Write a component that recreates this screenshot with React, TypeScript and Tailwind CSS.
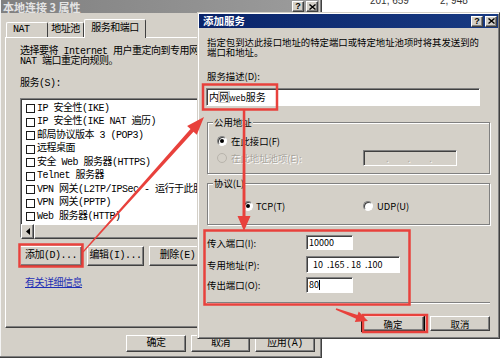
import React from "react";

const raised =
  "border border-t-white border-l-white border-r-[#404040] border-b-[#404040] shadow-[inset_-1px_-1px_#808080]";
const sunken =
  "border border-t-[#808080] border-l-[#808080] border-r-white border-b-white shadow-[inset_1px_1px_#404040]";
const mono = "font-['Liberation_Mono','Noto_Sans_CJK_SC',monospace] tracking-[-0.5px]";
const cjk = "font-['Noto_Sans_CJK_SC',sans-serif]";

function Btn({ w, h, children, def }: { w: string; h: string; children: React.ReactNode; def?: boolean }) {
  return (
    <div
      className={`${raised} ${w} ${h} ${def ? "outline outline-1 outline-black" : ""} shrink-0 bg-[#d4d0c8] flex items-center justify-center text-black`}
    >
      {children}
    </div>
  );
}

function CapBtn({ kind }: { kind: "help" | "close" }) {
  return (
    <div className={`${raised} w-[12px] h-[11px] bg-[#d4d0c8] flex items-center justify-center`}>
      {kind === "help" ? (
        <span className="text-[9px] font-bold leading-none text-black font-['Liberation_Sans',sans-serif]">?</span>
      ) : (
        <svg width="7" height="6" viewBox="0 0 7 6">
          <path d="M0.5 0.5 L6.5 5.5 M6.5 0.5 L0.5 5.5" stroke="black" strokeWidth="1.4" />
        </svg>
      )}
    </div>
  );
}

function Check() {
  return <span className="w-[9px] h-[9px] shrink-0 bg-white border border-[#1a1a1a]" />;
}

function Radio({ on, off }: { on?: boolean; off?: boolean }) {
  return (
    <span
      className={`w-[10px] h-[10px] shrink-0 rounded-full border flex items-center justify-center ${
        off
          ? "border-[#b8b4ac] bg-[#d4d0c8]"
          : "border-t-[#808080] border-l-[#808080] border-r-white border-b-white shadow-[inset_1px_1px_#404040] bg-white"
      }`}
    >
      {on && <span className="w-[4px] h-[4px] rounded-full bg-black" />}
    </span>
  );
}

// the list runs on under the other dialog; only the visible part is kept
const services = [
  "IP 安全性(IKE)",
  "IP 安全性(IKE NAT 遍历)",
  "邮局协议版本 3 (POP3)",
  "远程桌面",
  "安全 Web 服务器(HTTPS)",
  "Telnet 服务器",
  "VPN 网关(L2TP/IPSec - 运行于此服务",
  "VPN 网关(PPTP)",
  "Web 服务器(HTTP)",
];

function PropsDialog() {
  return (
    <div className="absolute left-0 top-0 w-[322px] h-[358px] bg-[#d4d0c8] border-r border-b border-r-[#404040] border-b-[#404040] shadow-[inset_-1px_-1px_#808080,inset_1px_0_#f4f4f4] flex flex-col pl-[1px] pr-[2px] text-[10px] text-black">
      <div className="h-[13px] shrink-0 bg-gradient-to-r from-[#808080] to-[#9c9c9c] flex items-center pl-[2px] pr-[1px]">
        <span className={`${cjk} text-[11px] font-bold leading-[12px] text-[#e4e4e4]`}>本地连接 3 属性</span>
        <div className="ml-auto flex gap-[2px]">
          <CapBtn kind="help" />
          <CapBtn kind="close" />
        </div>
      </div>

      <div className={`${mono} mt-[6px] ml-[5px] h-[18px] flex items-end leading-[10px]`}>
        <div className="w-[42px] h-[15px] border-t border-l border-r border-t-white border-l-white border-r-[#404040] rounded-t-[2px] flex items-center pl-[6px]">
          NAT
        </div>
        <div className="w-[36px] h-[15px] border-t border-r border-t-white border-r-[#404040] rounded-t-[2px] flex items-center justify-center">
          地址池
        </div>
        <div className="relative w-[62px] h-[19px] -mb-px bg-[#d4d0c8] border-t border-l border-r border-t-white border-l-white border-r-[#404040] rounded-t-[2px] flex items-center justify-center">
          服务和端口
        </div>
      </div>

      <div className={`${raised} ${mono} ml-[4px] w-[312px] h-[291px] shrink-0 overflow-hidden flex flex-col pl-[14px] leading-[10px]`}>
        <div className="mt-[9px] whitespace-nowrap">
          <div>选择要将 Internet 用户重定向到专用网</div>
          <div>NAT 端口重定向规则。</div>
        </div>
        <div className="mt-[12px]">服务(S):</div>
        <div className={`${sunken} mt-[9px] w-[285px] h-[140px] bg-white flex flex-col`}>
          <div className="pt-[3px] pl-[5px] flex flex-col">
            {services.map((s) => (
              <div key={s} className="h-[13.5px] flex items-center gap-[2px] whitespace-nowrap">
                <Check />
                <span>{s}</span>
              </div>
            ))}
          </div>
          <div className="mt-auto h-[15px] flex bg-[#e6e4df]">
            <div className={`${raised} w-[13px] h-[15px] bg-[#d4d0c8] flex items-center justify-center`}>
              <svg width="4" height="7" viewBox="0 0 4 7">
                <path d="M4 0 L0 3.5 L4 7 Z" fill="black" />
              </svg>
            </div>
            <div className={`${raised} flex-1 h-[15px] bg-[#d4d0c8]`} />
          </div>
        </div>
        <div className="mt-[8px] flex gap-[5px]">
          <Btn w="w-[62px]" h="h-[20px]">添加(D)...</Btn>
          <Btn w="w-[57px]" h="h-[20px]">编辑(I)...</Btn>
          <Btn w="w-[57px]" h="h-[20px]">删除(E)</Btn>
        </div>
        <div className="mt-[13px] ml-[5px] text-[#1f2fb4] underline">有关详细信息</div>
      </div>

      <div className={`${mono} mt-[7px] pr-[4px] flex justify-end gap-[5px] leading-[10px]`}>
        <Btn w="w-[60px]" h="h-[17px]">确定</Btn>
        <Btn w="w-[59px]" h="h-[17px]">取消</Btn>
        <Btn w="w-[60px]" h="h-[17px]">应用(A)</Btn>
      </div>
    </div>
  );
}

function AddServiceDialog() {
  return (
    <div
      className={`${cjk} absolute left-[197px] top-[12px] w-[303px] h-[327px] bg-[#d4d0c8] border border-t-[#d4d0c8] border-l-[#d4d0c8] border-r-[#404040] border-b-[#404040] shadow-[inset_1px_1px_white,inset_-1px_-1px_#808080] p-[1px] flex flex-col text-[9.4px] leading-[10px] text-black`}
    >
      <div className="h-[14px] shrink-0 bg-gradient-to-r from-[#0a246a] to-[#183a82] flex items-center pl-[4px] pr-[1px]">
        <span className="text-[10.5px] font-bold text-white leading-[12px]">添加服务</span>
        <div className="ml-auto flex gap-[2px]">
          <CapBtn kind="help" />
          <CapBtn kind="close" />
        </div>
      </div>

      <div className="px-[8px] flex flex-col">
        <div className="mt-[9px] whitespace-nowrap">
          <div>指定包到达此接口地址的特定端口或特定地址池项时将其发送到的</div>
          <div>端口和地址。</div>
        </div>
        <div className="mt-[14px]">服务描述(D):</div>
        <div className={`${sunken} mt-[7px] -ml-[1px] w-[274px] h-[18px] bg-white flex items-center pl-[2px] text-[10px]`}>
          内<span className="outline outline-1 outline-[#c8c8c8]">网</span>
          <span className="text-[8.5px]">web</span>服务
        </div>

        <div className="mt-[16px] w-[283px] h-[52px] border border-[#808080] shadow-[1px_1px_0_white,inset_1px_1px_0_white] flex flex-col pl-[9px]">
          <span className="-mt-[6px] -ml-[4px] self-start px-[1px] bg-[#d4d0c8]">公用地址</span>
          <div className="mt-[8px] h-[12px] flex items-center gap-[4px]">
            <Radio on />
            <span>在此接口(F)</span>
          </div>
          <div className="mt-[3px] h-[16px] flex items-center">
            <div className="w-[146px] flex items-center gap-[4px] text-[#a8a49c] [text-shadow:1px_1px_0_white]">
              <Radio off />
              <span>在此地址池项(E):</span>
            </div>
            <div className={`${sunken} w-[94px] h-[16px] bg-[#d4d0c8] flex items-center pl-[22px] gap-[19px] text-[#a8a49c] [text-shadow:1px_1px_0_white]`}>
              <span>.</span>
              <span>.</span>
              <span>.</span>
            </div>
          </div>
        </div>

        <div className="mt-[9px] w-[283px] h-[42px] border border-[#808080] shadow-[1px_1px_0_white,inset_1px_1px_0_white] flex flex-col pl-[9px]">
          <span className="-mt-[6px] -ml-[4px] self-start px-[1px] bg-[#d4d0c8]">协议(L)</span>
          <div className="mt-[12px] h-[12px] pl-[26px] flex items-center">
            <div className="w-[120px] flex items-center gap-[3px]">
              <Radio on />
              <span>TCP(T)</span>
            </div>
            <div className="flex items-center gap-[4px]">
              <Radio />
              <span>UDP(U)</span>
            </div>
          </div>
        </div>

        <div className="mt-[10px] h-[15px] flex items-center">
          <span className="w-[99px]">传入端口(I):</span>
          <div className={`${sunken} w-[47px] h-[15px] bg-white flex items-center pl-[2px] text-[9px]`}>10000</div>
        </div>
        <div className="mt-[6px] h-[17px] flex items-center">
          <span className="w-[99px]">专用地址(P):</span>
          <div className={`${sunken} w-[94px] h-[17px] bg-white flex items-center pl-[6px] text-[9px] whitespace-pre`}>
            {"10  .165 . 18  .100"}
          </div>
        </div>
        <div className="mt-[4px] h-[16px] flex items-center">
          <span className="w-[99px]">传出端口(O):</span>
          <div className={`${sunken} w-[47px] h-[16px] bg-white flex items-center pl-[2px] text-[9px]`}>
            80<span className="w-px h-[10px] bg-black" />
          </div>
        </div>

        <div className="mt-[9px] w-[283px] border-t border-b border-t-[#808080] border-b-white" />

        <div className="mt-[12px] flex justify-end gap-[6px]">
          <Btn w="w-[62px]" h="h-[15px]" def>
            确定
          </Btn>
          <Btn w="w-[60px]" h="h-[15px]">
            取消
          </Btn>
        </div>
      </div>
    </div>
  );
}

function arrow(x1: number, y1: number, x2: number, y2: number, tail: number, shaft: number, headL: number, headW: number) {
  const len = Math.hypot(x2 - x1, y2 - y1);
  const ux = (x2 - x1) / len;
  const uy = (y2 - y1) / len;
  const nx = -uy;
  const ny = ux;
  const bx = x2 - ux * headL;
  const by = y2 - uy * headL;
  const p = (x: number, y: number) => `${x.toFixed(1)},${y.toFixed(1)}`;
  return [
    p(x1 + (nx * tail) / 2, y1 + (ny * tail) / 2),
    p(bx + (nx * shaft) / 2, by + (ny * shaft) / 2),
    p(bx + (nx * headW) / 2, by + (ny * headW) / 2),
    p(x2, y2),
    p(bx - (nx * headW) / 2, by - (ny * headW) / 2),
    p(bx - (nx * shaft) / 2, by - (ny * shaft) / 2),
    p(x1 - (nx * tail) / 2, y1 - (ny * tail) / 2),
  ].join(" ");
}

function Marks() {
  const red = "#e8413c";
  return (
    <svg className="absolute inset-0 pointer-events-none" width="500" height="361" viewBox="0 0 500 361">
      <g fill="none" stroke={red} strokeWidth="2.5">
        <rect x="19.5" y="244.5" width="63" height="22" />
        <rect x="203" y="84.5" width="74" height="25" />
        <rect x="204.5" y="230.5" width="205" height="74" />
        <rect x="363" y="315" width="64" height="17" />
      </g>
      <g fill={red}>
        <polygon points={arrow(83, 252, 204, 117, 1.2, 4, 18, 13)} />
        <polygon points={arrow(244, 110, 244, 231, 2.5, 3, 15, 13)} />
        <polygon points={arrow(336, 309, 368, 321, 1.5, 4, 12, 11)} />
      </g>
    </svg>
  );
}

export default function App() {
  return (
    <div className="relative w-[500px] h-[361px] overflow-hidden bg-white">
      <div className="flex pl-[370px] -mt-[5px] text-[10px] leading-[12px] text-[#333] font-['Liberation_Sans',sans-serif]">
        <span className="w-[70px]">201, 659</span>
        <span>2, 948</span>
      </div>
      <PropsDialog />
      <AddServiceDialog />
      <Marks />
    </div>
  );
}
